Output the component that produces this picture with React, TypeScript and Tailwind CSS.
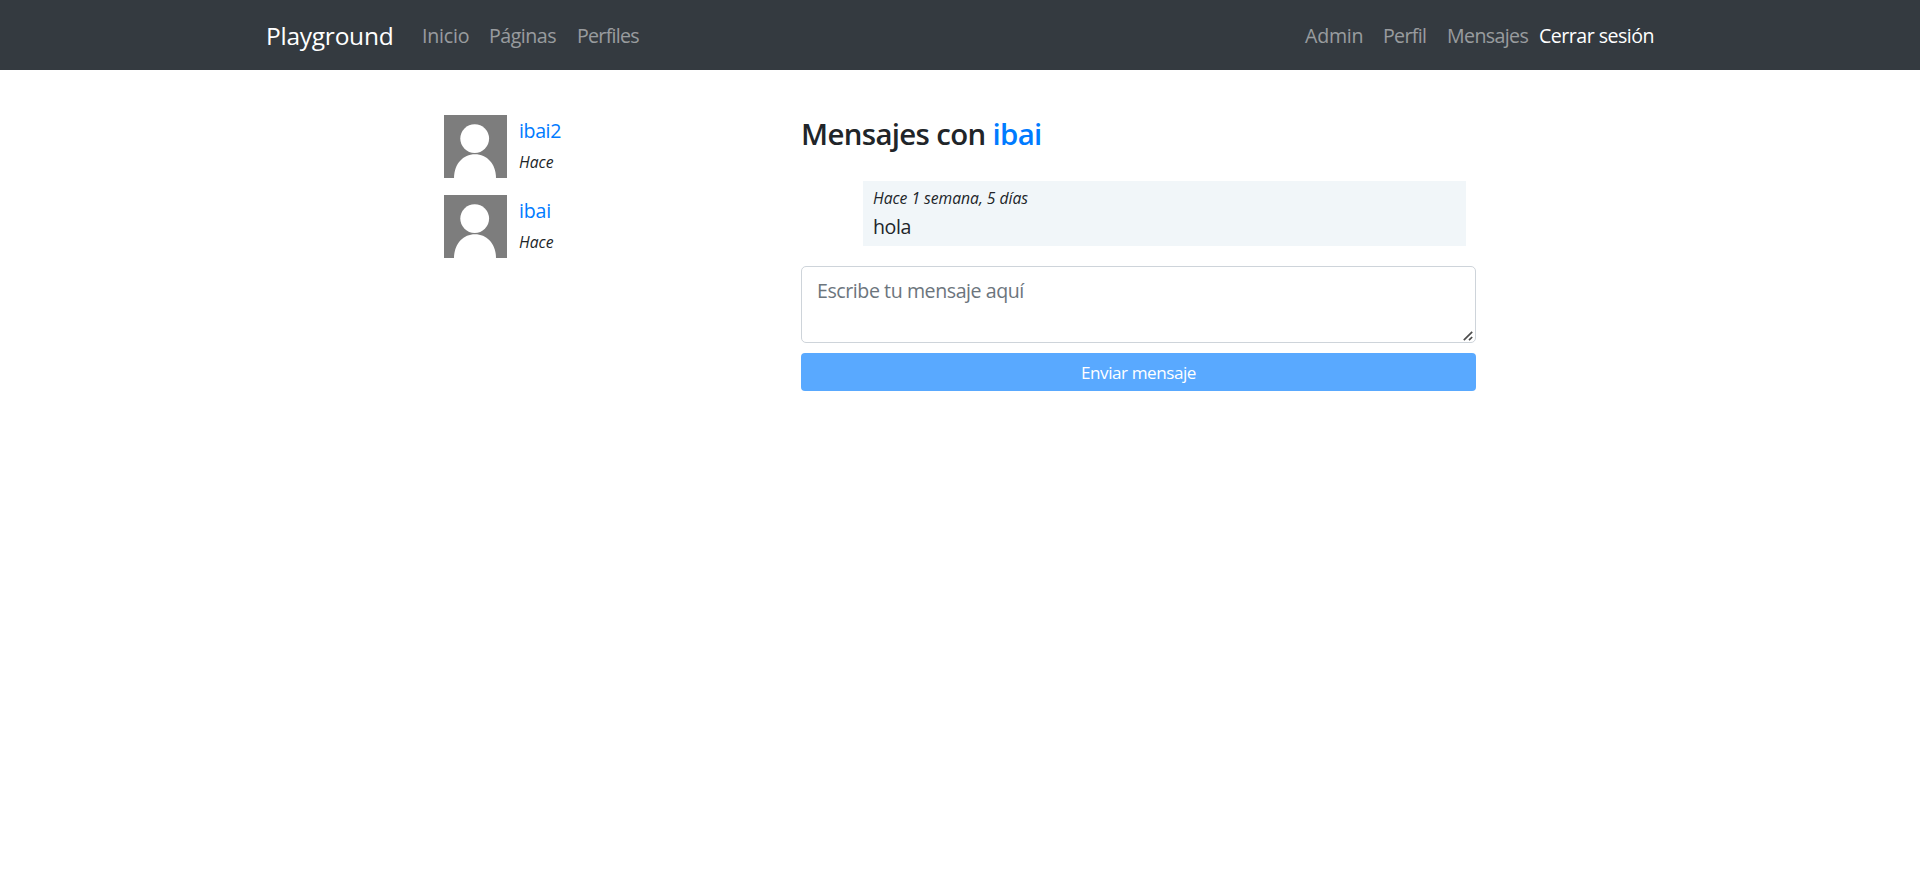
type Conversation = { name: string; tracking: string };

const conversations: Conversation[] = [
  { name: 'ibai2', tracking: 'tracking-[-0.4px]' },
  { name: 'ibai', tracking: 'tracking-[-0.2px]' },
];

function Avatar() {
  return (
    <svg viewBox="0 0 63 63" className="block h-[63px] w-[63px] shrink-0">
      <rect width="63" height="63" fill="#7d7d7d" />
      <circle cx="30.7" cy="23.6" r="14.4" fill="#fff" />
      <path d="M10 63C10 49 19 39.2 31 39.2S52 49 52 63Z" fill="#fff" />
    </svg>
  );
}

function Navbar() {
  return (
    <nav className="h-[70px] bg-[#343a40] pl-[266px] pr-[265px] pt-[2px]">
      <div className="flex h-full items-center whitespace-nowrap text-[19.6px] leading-[30px] text-white/50">
        <a href="#" className="w-[156px] text-[24.5px] tracking-[-0.25px] text-white">Playground</a>
        <a href="#" className="w-[67px] tracking-[-0.21px]">Inicio</a>
        <a href="#" className="w-[88px] tracking-[-0.5px]">Páginas</a>
        <a href="#" className="tracking-[-0.71px]">Perfiles</a>
        <div className="ml-auto flex">
          <a href="#" className="w-[78px] tracking-[-0.24px]">Admin</a>
          <a href="#" className="w-[64px] tracking-[-0.67px]">Perfil</a>
          <a href="#" className="w-[92px] tracking-[-0.62px]">Mensajes</a>
          <a href="#" className="w-[116px] tracking-[-0.52px] text-white">Cerrar sesión</a>
        </div>
      </div>
    </nav>
  );
}

export default function App() {
  return (
    <div className="min-h-screen bg-white font-['Open_Sans',sans-serif] text-[#212529]">
      <Navbar />
      <main className="flex pl-[444px] pt-[45px]">
        <aside className="flex w-[357px] flex-col gap-[17px]">
          {conversations.map((c) => (
            <div key={c.name} className="flex gap-3">
              <Avatar />
              <div className="pt-px">
                <a href="#" className={`block text-[19.6px] leading-[30px] text-[#007bff] ${c.tracking}`}>
                  {c.name}
                </a>
                <em className="mt-1 block text-[15.7px] leading-[24px]">Hace</em>
              </div>
            </div>
          ))}
        </aside>
        <section className="w-[675px]">
          <h2 className="whitespace-nowrap pt-px text-[29.4px] font-semibold leading-[36px] tracking-[-0.65px]">
            Mensajes con <a href="#" className="text-[#007bff]">ibai</a>
          </h2>
          <div className="ml-[62px] mr-[10px] mt-[29px] h-[65px] bg-[#f1f6f9] pl-[10px] pt-[2px]">
            <em className="block text-[15.7px] leading-[30px] tracking-[-0.03px]">Hace 1 semana, 5 días</em>
            <p className="-mt-px text-[19.6px] leading-[30px] tracking-[-0.4px]">hola</p>
          </div>
          <div className="relative mt-5">
            <textarea
              placeholder="Escribe tu mensaje aquí"
              className="block h-[77px] w-full resize-none rounded-[5px] border border-[#ced4da] px-[15px] py-[9px] text-[19.6px] leading-[30px] tracking-[-0.44px] placeholder:text-[#6c757d]"
            />
            <svg viewBox="0 0 10 10" className="absolute bottom-[2px] right-[3px] h-[10px] w-[10px]" stroke="#4d4d4d" strokeWidth="1.7">
              <path d="M.8 9.2 9.2.8M6 9.2 9.2 6" />
            </svg>
          </div>
          <button className="mt-[10px] block h-[38px] w-full rounded-[4px] bg-[#59a9ff] pt-[2px] text-[17.1px] leading-[26px] tracking-[-0.45px] text-white">
            Enviar mensaje
          </button>
        </section>
      </main>
    </div>
  );
}
